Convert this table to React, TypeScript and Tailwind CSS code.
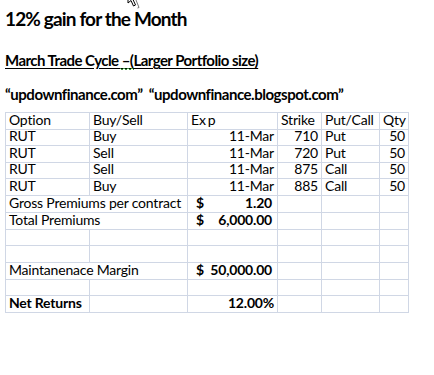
import React from "react";

type Cell = {
  text?: React.ReactNode;
  align?: "left" | "right";
  bold?: boolean;
  span?: boolean;
  money?: string;
};

const rowHeights = ["h-[17px]", "h-[16px]", "h-[17px]", "h-[16px]", "h-[17px]", "h-[17px]", "h-[17px]", "h-[16px]", "h-[17px]", "h-[17px]", "h-[16px]", "h-[17px]"];

const trades = [
  ["RUT", "Buy", "11-Mar", "710", "Put", "50"],
  ["RUT", "Sell", "11-Mar", "720", "Put", "50"],
  ["RUT", "Sell", "11-Mar", "875", "Call", "50"],
  ["RUT", "Buy", "11-Mar", "885", "Call", "50"],
];

const empty: Cell = {};

const rows: Cell[][] = [
  [
    { text: "Option" },
    { text: "Buy/Sell" },
    { text: <>Ex<span className="ml-[2px]">p</span></> },
    { text: "Strike" },
    { text: "Put/Call" },
    { text: "Qty" },
  ],
  ...trades.map((t) => [
    { text: t[0] },
    { text: t[1] },
    { text: t[2], align: "right" as const },
    { text: t[3], align: "right" as const },
    { text: t[4] },
    { text: t[5], align: "right" as const },
  ]),
  [{ text: "Gross Premiums per contract", span: true }, { money: "1.20" }, empty, empty, empty],
  [{ text: "Total Premiums", span: true }, { money: "6,000.00" }, empty, empty, empty],
  [empty, empty, empty, empty, empty, empty],
  [empty, empty, empty, empty, empty, empty],
  [{ text: "Maintanenace Margin", span: true }, { money: "50,000.00" }, empty, empty, empty],
  [empty, empty, empty, empty, empty, empty],
  [{ text: "Net Returns", bold: true }, empty, { text: "12.00%", bold: true, align: "right" }, empty, empty, empty],
];

function Cursor() {
  return (
    <svg className="absolute left-[127px] top-[-6px]" width="16" height="16" viewBox="0 0 16 16">
      <path d="M1 0 L1 9 L4 6.5 L6.5 12 L8.5 11 L6 5.5 L10 5.5 Z" fill="#fff" stroke="#000" strokeWidth="1" />
      <path d="M9 6 L12 13.5 L10.5 14" fill="none" stroke="#555" strokeWidth="0.8" />
    </svg>
  );
}

export default function App() {
  return (
    <div className="relative w-[434px] h-[375px] bg-white text-black overflow-hidden font-['Lato','Liberation_Sans',sans-serif]">
      <Cursor />
      <div className="pl-[5px] pt-[7px]">
        <h1 className="text-[19px] font-bold leading-[24px] tracking-[-0.85px]">12% gain for the Month</h1>
        <div className="relative mt-[20px] text-[15px] font-bold leading-[18px] tracking-[-0.55px]">
          <span className="underline underline-offset-[2px]">March Trade Cycle –(Larger Portfolio size)</span>
          <svg className="absolute left-[115px] top-[16px]" width="14" height="4" viewBox="0 0 14 4">
            <path d="M0 1 L2 3 L4 1 L6 3 L8 1 L10 3 L12 1 L14 3" fill="none" stroke="#3a9a3a" strokeWidth="1" />
          </svg>
        </div>
        <p className="mt-[16px] text-[15px] font-bold leading-[18px] tracking-[-0.47px]">
          “updownfinance.com”&nbsp; “updownfinance.blogspot.com”
        </p>
      </div>

      <div className="ml-[5px] mt-[9px] grid w-fit grid-cols-[84px_98px_90px_44px_58px_29px] border-l border-t border-[#d0d7e5] text-[14px] leading-none tracking-[-0.2px]">
        {rows.map((row, r) =>
          row.map((c, i) => (
            <div
              key={`${r}-${i}`}
              className={`${rowHeights[r]} flex items-end pb-[2px] border-r border-b border-[#d0d7e5] overflow-visible whitespace-nowrap ${
                c.span ? "col-span-2 pl-[3px]" : c.align === "right" ? "justify-end pr-[3px]" : "pl-[3px]"
              } ${c.bold ? "font-bold" : ""}`}
            >
              {c.money ? (
                <div className="flex w-full justify-between font-bold pl-[5px] pr-[5px]">
                  <span>$</span>
                  <span>{c.money}</span>
                </div>
              ) : (
                c.text
              )}
            </div>
          ))
        )}
      </div>
    </div>
  );
}
